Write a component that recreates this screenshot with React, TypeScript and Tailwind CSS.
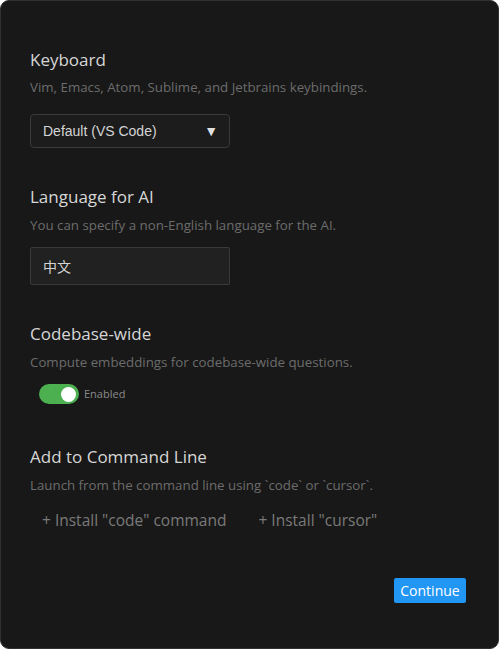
import React from "react";

export default function App() {
  return (
    <div className="w-[499px] h-[649px] bg-white">
      <div
        className="w-[499px] h-[649px] bg-[#181818] border border-[#303030] rounded-[9px] pl-[29px] pr-[32px] flex flex-col"
        style={{ fontFamily: '"Open Sans", "Noto Sans", sans-serif' }}
      >
        {/* Keyboard */}
        <div className="mt-[47px] text-[17px] leading-[24px] text-[#d6d6d6]">Keyboard</div>
        <div className="mt-[5px] text-[13.3px] leading-[20px] text-[#6c6c6c]">
          Vim, Emacs, Atom, Sublime, and Jetbrains keybindings.
        </div>
        <div
          className="mt-[17px] w-[200px] h-[34px] rounded-[4px] border border-[#3a3a3a] bg-[#1c1c1c] flex items-center justify-between pl-[12px] pr-[11px] text-[14px] text-[#d4d4d4]"
          style={{ fontFamily: '"Liberation Sans", Arial, sans-serif' }}
        >
          <span>Default (VS Code)</span>
          <span className="text-[14px] text-[#e0e0e0]">▼</span>
        </div>

        {/* Language */}
        <div className="mt-[37px] text-[17px] leading-[24px] text-[#d6d6d6]">Language for AI</div>
        <div className="mt-[6px] text-[13.3px] leading-[20px] text-[#6c6c6c]">
          You can specify a non-English language for the AI.
        </div>
        <div
          className="mt-[12px] w-[200px] h-[38px] rounded-[2px] border border-[#3a3a3a] bg-[#212121] flex items-center pl-[12px] text-[14px] text-[#d4d4d4]"
          style={{ fontFamily: '"Noto Sans CJK SC", "Noto Sans", sans-serif' }}
        >
          中文
        </div>

        {/* Codebase-wide */}
        <div className="mt-[37px] text-[17px] leading-[24px] text-[#d6d6d6]">Codebase-wide</div>
        <div className="mt-[6px] text-[13.3px] leading-[20px] text-[#6c6c6c]">
          Compute embeddings for codebase-wide questions.
        </div>
        <div className="mt-[12px] ml-[9px] flex items-center gap-[5px]">
          <div className="w-[40px] h-[20px] rounded-full bg-[#4caf50] flex items-center justify-end pr-[3px]">
            <div className="w-[15px] h-[15px] rounded-full bg-white" />
          </div>
          <span className="text-[11px] leading-[20px] text-[#8a8a8a]">Enabled</span>
        </div>

        {/* Command line */}
        <div className="mt-[41px] text-[17px] leading-[24px] text-[#d6d6d6]">Add to Command Line</div>
        <div className="mt-[6px] text-[13.3px] leading-[20px] text-[#6c6c6c]">
          Launch from the command line using `code` or `cursor`.
        </div>
        <div className="mt-[14px] flex text-[15.5px] leading-[22px] text-[#7a7a7a]">
          <span className="ml-[12px]">+ Install "code" command</span>
          <span className="ml-[32px]">+ Install "cursor"</span>
        </div>

        <div className="mt-[47px] flex justify-end">
          <button className="w-[72px] h-[25px] rounded-[2px] bg-[#2196f3] text-white text-[14px] leading-[25px]">
            Continue
          </button>
        </div>
      </div>
    </div>
  );
}
